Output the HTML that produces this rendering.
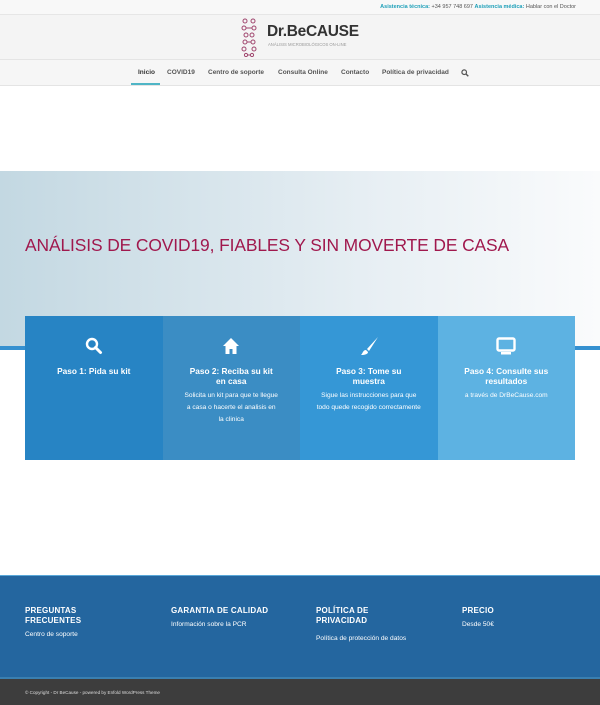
<!DOCTYPE html>
<html><head><meta charset="utf-8"><style>
*{margin:0;padding:0;box-sizing:border-box}
body{width:600px;height:705px;overflow:hidden;font-family:"Liberation Sans",sans-serif;background:#fff;position:relative}
.abs{position:absolute}
.top{left:0;top:0;width:600px;height:15px;background:#f8f8f8;border-bottom:1px solid #e6e6e6;font-size:5.5px;text-align:right;padding:4px 24px 0 0;color:#555}
.top b{color:#1d9fb8}
.logo{left:0;top:15px;width:600px;height:45px;background:#f4f4f4;border-bottom:1px solid #e4e4e4}
.nav{left:0;top:60px;width:600px;height:26px;background:#f6f6f6;border-bottom:1px solid #e4e4e4;font-size:6.5px;color:#555;font-weight:bold}
.nav span{position:absolute;top:9px}
.hero{left:0;top:171px;width:600px;height:175px;background:linear-gradient(90deg,#c3d8e2,#e6eef3 60%,#fafbfc)}
.line{left:0;top:346px;width:600px;height:4px;background:#3590d0}
.h1{left:25px;top:235px;font-size:17.4px;color:#a0184d;letter-spacing:-.1px}
.box{top:316px;height:144px;width:137.5px;color:#fff;text-align:center}
.box h3{font-size:8.3px;font-weight:bold;margin:0 24px;line-height:10px}
.box p{font-size:6.6px;line-height:12px;margin:4px 22px 0}
.ic{height:22px;margin-top:19px;margin-bottom:9px;display:flex;justify-content:center;align-items:center}
.foot{left:0;top:575px;width:600px;height:102px;background:#24669f;border-top:1px solid #5aa8d8;color:#fff}
.foot div{position:absolute;top:30px}
.foot h4{font-size:8px;line-height:10px;font-weight:bold;letter-spacing:.2px}
.foot p{font-size:6.6px;margin-top:5px}
.bot{left:0;top:677px;width:600px;height:28px;background:#3d3d3d;border-top:2px solid #3a7fb0;font-size:4.6px;color:#ddd;padding:11px 0 0 25px}
</style></head><body>
<div class="abs top"><b>Asistencia técnica:</b> +34 957 748 697 <b>Asistencia médica:</b> Hablar con el Doctor</div>
<div class="abs logo">
<svg class="abs" style="left:240px;top:2px" width="24" height="40" viewBox="0 0 24 40" fill="none" stroke="#a0466e" stroke-width="1">
<circle cx="5" cy="4" r="2"/><circle cx="13" cy="4" r="2"/><circle cx="4" cy="11" r="2"/><circle cx="14" cy="11" r="2"/><line x1="6" y1="11" x2="12" y2="11"/><circle cx="6" cy="18" r="2"/><circle cx="12" cy="18" r="2"/><circle cx="5" cy="25" r="2"/><circle cx="13" cy="25" r="2"/><line x1="7" y1="25" x2="11" y2="25"/><circle cx="4" cy="32" r="2"/><circle cx="14" cy="32" r="2"/><circle cx="6" cy="38" r="1.6"/><circle cx="12" cy="38" r="1.6"/><line x1="8" y1="38" x2="10" y2="38"/></svg>
<div class="abs" style="left:267px;top:8px;font-size:15.5px;font-weight:bold;color:#333;letter-spacing:-.3px">Dr.BeCAUSE</div>
<div class="abs" style="left:268px;top:27px;font-size:4.2px;color:#999">ANÁLISIS MICROBIOLÓGICOS ON-LINE</div>
</div>
<div class="abs nav">
<span style="left:138px;color:#333">Inicio</span>
<div class="abs" style="left:131px;top:23px;width:29px;height:2px;background:#4fb5c6"></div>
<span style="left:167px">COVID19</span><span style="left:208px">Centro de soporte</span><span style="left:278px">Consulta Online</span><span style="left:341px">Contacto</span><span style="left:382px">Política de privacidad</span>
<svg class="abs" style="left:461px;top:9px" width="8" height="8" viewBox="0 0 8 8"><circle cx="3.2" cy="3.2" r="2.3" fill="none" stroke="#555" stroke-width="1.2"/><line x1="5" y1="5" x2="7.3" y2="7.3" stroke="#555" stroke-width="1.4"/></svg>
</div>
<div class="abs hero"></div>
<div class="abs line"></div>
<div class="abs h1">ANÁLISIS DE COVID19, FIABLES Y SIN MOVERTE DE CASA</div>
<div class="abs box" style="left:25px;background:#2784c4"><div class="ic"><svg width="18" height="18" viewBox="0 0 18 18"><circle cx="7" cy="7" r="5" fill="none" stroke="#fff" stroke-width="2.4"/><line x1="10.5" y1="10.5" x2="15.5" y2="15.5" stroke="#fff" stroke-width="3" stroke-linecap="round"/></svg></div><h3 style="margin:0 10px">Paso 1: Pida su kit</h3></div>
<div class="abs box" style="left:162.5px;background:#3b8dc4"><div class="ic"><svg width="18" height="18" viewBox="0 0 18 18"><path d="M9 1L1 9h2.5v8h4v-5h3v5h4V9H17z" fill="#fff"/></svg></div><h3>Paso 2: Reciba su kit en casa</h3><p>Solicita un kit para que te llegue a casa o hacerte el analisis en la clinica</p></div>
<div class="abs box" style="left:300px;background:#3597d6"><div class="ic"><svg width="20" height="20" viewBox="0 0 20 20"><path d="M19 1L8 13l2 2L19 1z" fill="#fff"/><path d="M7 14c-3 0-3 3-5 5 4 0 7-1 7-3z" fill="#fff"/></svg></div><h3 style="margin:0 30px">Paso 3: Tome su muestra</h3><p style="margin:4px 16px 0">Sigue las instrucciones para que todo quede recogido correctamente</p></div>
<div class="abs box" style="left:437.5px;background:#5db2e2"><div class="ic"><svg width="20" height="18" viewBox="0 0 20 18"><rect x="1.5" y="1.5" width="17" height="12" rx="1.5" fill="none" stroke="#fff" stroke-width="2.4"/><rect x="5" y="15" width="10" height="2.5" fill="#fff"/></svg></div><h3 style="margin:0 18px">Paso 4: Consulte sus resultados</h3><p style="margin:4px 10px 0">a través de DrBeCause.com</p></div>
<div class="abs foot">
<div style="left:25px"><h4>PREGUNTAS<br>FRECUENTES</h4><p>Centro de soporte</p></div>
<div style="left:171px"><h4>GARANTIA DE CALIDAD</h4><p>Información sobre la PCR</p></div>
<div style="left:316px"><h4>POLÍTICA DE<br>PRIVACIDAD</h4><p style="margin-top:9px">Política de protección de datos</p></div>
<div style="left:462px"><h4>PRECIO</h4><p>Desde 50€</p></div>
</div>
<div class="abs bot">© Copyright - Dr BeCause - powered by Enfold WordPress Theme</div>
</body></html>
